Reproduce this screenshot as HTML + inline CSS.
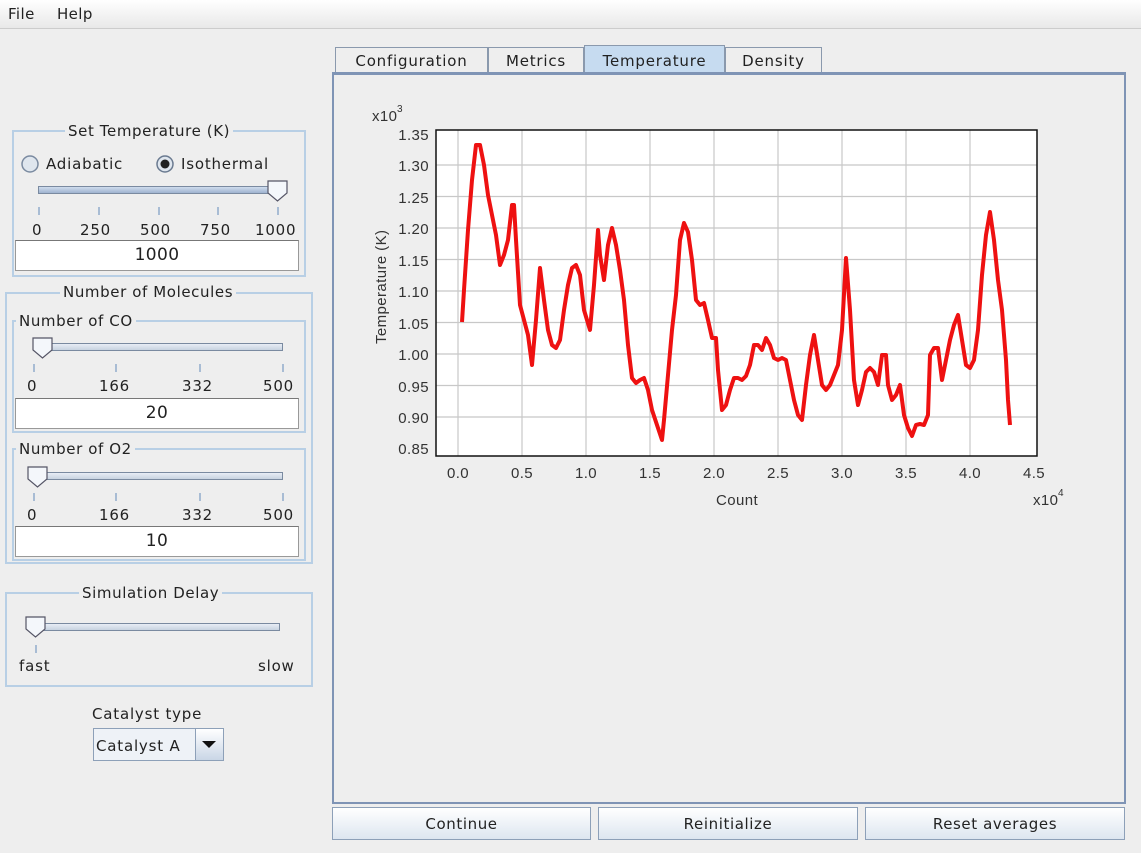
<!DOCTYPE html>
<html><head><meta charset="utf-8"><style>
*{margin:0;padding:0;box-sizing:border-box}
body{width:1141px;height:853px;background:#eeeeee;font-family:"DejaVu Sans",sans-serif;font-size:15px;color:#222;position:relative;overflow:hidden;letter-spacing:.4px}
.a{position:absolute}
.menu{left:0;top:0;width:1141px;height:29px;background:linear-gradient(#fff,#e8e8e8);border-bottom:1px solid #ccc}
.box{position:absolute;border:2px solid #b8cfe5}
.ttl{position:absolute;background:#eeeeee;padding:0 3px;white-space:nowrap;line-height:16px;letter-spacing:.6px}
.field{position:absolute;background:#fff;border:1px solid #999;border-top-color:#777;text-align:center;font-size:17px;line-height:28px}
.track{position:absolute;height:8px;border:1px solid #7a8aa0;background:linear-gradient(#e8edf5,#c8d3e0)}
.tick{position:absolute;width:2px;height:8px;background:#a8bcd4}
.lbl{position:absolute;font-size:15px;white-space:nowrap;letter-spacing:.8px}
.btn{position:absolute;top:807px;height:33px;border:1px solid #8da0b8;background:linear-gradient(#fff,#dde6f0);text-align:center;line-height:32px;font-size:15px;letter-spacing:.6px}
.tab{position:absolute;top:47px;height:26px;border:1px solid #8a99ad;border-bottom:none;text-align:center;line-height:26px;font-size:15px;letter-spacing:.8px;background:#eee}
</style></head><body>
<div class="a menu"></div>
<div class="a" style="left:8px;top:5px">File</div>
<div class="a" style="left:57px;top:5px">Help</div>

<div class="box" style="left:12px;top:130px;width:294px;height:147px"></div>
<div class="ttl" style="left:65px;top:123px">Set Temperature (K)</div>
<svg class="a" style="left:20px;top:154px" width="20" height="20"><circle cx="10" cy="10" r="8" fill="#dfe6ee" stroke="#7a8aa0" stroke-width="1.5"/></svg>
<div class="lbl" style="left:46px;top:155px">Adiabatic</div>
<svg class="a" style="left:155px;top:154px" width="20" height="20"><circle cx="10" cy="10" r="8" fill="#dfe6ee" stroke="#6a7a90" stroke-width="1.5"/><circle cx="10" cy="10" r="4.5" fill="#222"/></svg>
<div class="lbl" style="left:181px;top:155px">Isothermal</div>
<div class="track" style="left:38px;top:186px;width:244px;background:linear-gradient(#cfdcee,#9fb3d0)"></div>
<svg class="a" style="left:266px;top:179px" width="24" height="24"><path d="M2 2h19v12l-9.5 8L2 14z" fill="#f4f7fb" stroke="#556" stroke-width="1.2"/></svg>
<div class="tick" style="left:38px;top:207px"></div><div class="tick" style="left:98px;top:207px"></div><div class="tick" style="left:158px;top:207px"></div><div class="tick" style="left:217px;top:207px"></div><div class="tick" style="left:277px;top:207px"></div>
<div class="lbl" style="left:32px;top:221px">0</div><div class="lbl" style="left:80px;top:221px">250</div><div class="lbl" style="left:140px;top:221px">500</div><div class="lbl" style="left:200px;top:221px">750</div><div class="lbl" style="left:255px;top:221px">1000</div>
<div class="field" style="left:15px;top:240px;width:284px;height:31px">1000</div>

<div class="box" style="left:5px;top:292px;width:308px;height:272px"></div>
<div class="ttl" style="left:60px;top:284px">Number of Molecules</div>
<div class="box" style="left:12px;top:320px;width:294px;height:113px"></div>
<div class="ttl" style="left:16px;top:313px">Number of CO</div>
<div class="track" style="left:33px;top:343px;width:250px"></div>
<svg class="a" style="left:31px;top:336px" width="24" height="24"><path d="M2 2h19v12l-9.5 8L2 14z" fill="#f4f7fb" stroke="#556" stroke-width="1.2"/></svg>
<div class="tick" style="left:33px;top:364px"></div><div class="tick" style="left:115px;top:364px"></div><div class="tick" style="left:199px;top:364px"></div><div class="tick" style="left:282px;top:364px"></div>
<div class="lbl" style="left:27px;top:377px">0</div><div class="lbl" style="left:99px;top:377px">166</div><div class="lbl" style="left:182px;top:377px">332</div><div class="lbl" style="left:263px;top:377px">500</div>
<div class="field" style="left:15px;top:398px;width:284px;height:31px">20</div>

<div class="box" style="left:12px;top:448px;width:294px;height:113px"></div>
<div class="ttl" style="left:16px;top:441px">Number of O2</div>
<div class="track" style="left:33px;top:472px;width:250px"></div>
<svg class="a" style="left:26px;top:465px" width="24" height="24"><path d="M2 2h19v12l-9.5 8L2 14z" fill="#f4f7fb" stroke="#556" stroke-width="1.2"/></svg>
<div class="tick" style="left:33px;top:493px"></div><div class="tick" style="left:115px;top:493px"></div><div class="tick" style="left:199px;top:493px"></div><div class="tick" style="left:282px;top:493px"></div>
<div class="lbl" style="left:27px;top:506px">0</div><div class="lbl" style="left:99px;top:506px">166</div><div class="lbl" style="left:182px;top:506px">332</div><div class="lbl" style="left:263px;top:506px">500</div>
<div class="field" style="left:15px;top:526px;width:284px;height:31px">10</div>

<div class="box" style="left:5px;top:592px;width:308px;height:95px"></div>
<div class="ttl" style="left:79px;top:585px">Simulation Delay</div>
<div class="track" style="left:30px;top:623px;width:250px"></div>
<svg class="a" style="left:24px;top:615px" width="24" height="24"><path d="M2 2h19v12l-9.5 8L2 14z" fill="#f4f7fb" stroke="#556" stroke-width="1.2"/></svg>
<div class="tick" style="left:35px;top:645px"></div>
<div class="lbl" style="left:19px;top:657px">fast</div>
<div class="lbl" style="left:258px;top:657px">slow</div>

<div class="lbl" style="left:92px;top:705px">Catalyst type</div>
<div class="a" style="left:93px;top:728px;width:131px;height:33px;border:1px solid #8da0b8;background:#eef2f7"></div>
<div class="lbl" style="left:96px;top:737px">Catalyst A</div>
<div class="a" style="left:195px;top:729px;width:28px;height:31px;border-left:1px solid #8da0b8;background:linear-gradient(#fff,#c9d6e6)"></div>
<svg class="a" style="left:200px;top:738px" width="18" height="12"><path d="M2 3h14l-7 7z" fill="#111"/></svg>

<div class="tab" style="left:335px;width:153px">Configuration</div>
<div class="tab" style="left:488px;width:96px">Metrics</div>
<div class="tab" style="left:584px;width:141px;background:#c6dbf0;height:30px;top:45px;line-height:30px">Temperature</div>
<div class="tab" style="left:725px;width:97px">Density</div>
<div class="a" style="left:332px;top:72px;width:794px;height:732px;border:2px solid #7f94b5;border-top-width:3px"></div>

<svg class="a" style="left:334px;top:75px" width="790" height="450" viewBox="334 75 790 450">
<rect x="436" y="130" width="601" height="326" fill="#fff"/>
<g stroke="#c8c8c8" stroke-width="1.2">
<line x1="458" y1="130" x2="458" y2="456"/><line x1="522" y1="130" x2="522" y2="456"/><line x1="586" y1="130" x2="586" y2="456"/><line x1="650" y1="130" x2="650" y2="456"/><line x1="714" y1="130" x2="714" y2="456"/><line x1="778" y1="130" x2="778" y2="456"/><line x1="842" y1="130" x2="842" y2="456"/><line x1="906" y1="130" x2="906" y2="456"/><line x1="970" y1="130" x2="970" y2="456"/>
<line x1="436" y1="165" x2="1037" y2="165"/><line x1="436" y1="196.5" x2="1037" y2="196.5"/><line x1="436" y1="228" x2="1037" y2="228"/><line x1="436" y1="259.5" x2="1037" y2="259.5"/><line x1="436" y1="291" x2="1037" y2="291"/><line x1="436" y1="322.5" x2="1037" y2="322.5"/><line x1="436" y1="354" x2="1037" y2="354"/><line x1="436" y1="385.5" x2="1037" y2="385.5"/><line x1="436" y1="417" x2="1037" y2="417"/>
</g>
<rect x="436" y="130" width="601" height="326" fill="none" stroke="#111" stroke-width="1.5"/>
<polyline fill="none" stroke="#ee1111" stroke-width="4" stroke-linejoin="round" points="462,322 464,290 468,230 472,180 476,145 480,145 484,165 488,195 492,215 496,235 500,265 504,255 508,240 512,205 514,205 516,240 520,305 524,320 528,335 532,365 536,320 540,268 544,300 548,330 552,345 556,348 560,340 564,310 568,285 572,268 576,265 580,275 584,310 590,330 594,285 598,230 600,255 604,280 608,245 612,228 616,245 620,270 624,300 628,345 632,378 636,383 640,380 644,378 648,390 652,410 658,428 662,440 664,420 668,375 672,330 676,295 680,240 684,223 688,232 692,260 696,300 700,305 704,303 708,320 712,338 716,338 718,370 722,410 726,405 730,390 734,378 738,378 742,380 746,376 750,365 754,345 758,345 762,350 766,338 770,345 774,358 778,360 782,358 786,360 790,380 794,400 798,415 802,420 806,385 810,355 814,335 818,360 822,385 826,390 830,385 834,375 838,365 842,330 846,258 850,310 854,380 858,405 862,390 866,372 870,368 874,372 878,385 882,355 886,355 888,385 892,400 896,395 900,385 904,415 908,428 912,436 916,425 920,424 924,425 928,415 930,355 934,348 938,348 942,380 946,360 950,340 954,325 958,315 962,340 966,365 970,368 974,360 978,330 982,275 986,235 990,212 994,240 998,280 1002,310 1006,360 1008,400 1010,425"/>
<g font-family="Liberation Sans,sans-serif" font-size="15" fill="#333" text-anchor="end">
<text x="429" y="140">1.35</text><text x="429" y="171">1.30</text><text x="429" y="203">1.25</text><text x="429" y="234">1.20</text><text x="429" y="266">1.15</text><text x="429" y="297">1.10</text><text x="429" y="329">1.05</text><text x="429" y="360">1.00</text><text x="429" y="392">0.95</text><text x="429" y="423">0.90</text><text x="429" y="454">0.85</text>
</g>
<g font-family="Liberation Sans,sans-serif" font-size="15" fill="#333" text-anchor="middle">
<text x="458" y="478">0.0</text><text x="522" y="478">0.5</text><text x="586" y="478">1.0</text><text x="650" y="478">1.5</text><text x="714" y="478">2.0</text><text x="778" y="478">2.5</text><text x="842" y="478">3.0</text><text x="906" y="478">3.5</text><text x="970" y="478">4.0</text><text x="1034" y="478">4.5</text>
<text x="737" y="505">Count</text>
</g>
<g font-family="Liberation Sans,sans-serif" font-size="15" fill="#333">
<text x="372" y="121">x10</text><text x="397" y="112" font-size="10">3</text>
<text x="1033" y="505">x10</text><text x="1058" y="496" font-size="10">4</text>
<text transform="translate(386,344) rotate(-90)">Temperature (K)</text>
</g>
</svg>

<div class="btn" style="left:332px;width:259px">Continue</div>
<div class="btn" style="left:598px;width:260px">Reinitialize</div>
<div class="btn" style="left:865px;width:260px">Reset averages</div>
</body></html>
